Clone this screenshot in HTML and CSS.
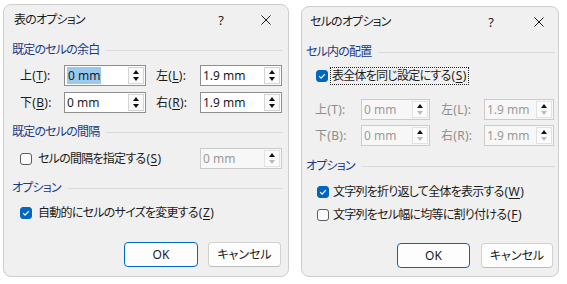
FILE: index.html
```html
<!DOCTYPE html>
<html lang="ja">
<head>
<meta charset="utf-8">
<title>表のオプション / セルのオプション</title>
<link rel="stylesheet" href="styles.css">
</head>
<body>
<div class="screen">
  <section class="dialog dlg-table">
    <header class="titlebar tb-table">
      <span class="title">表のオプション</span>
      <span class="help help-table">?</span>
      <span class="close close-table"><svg width="10" height="10" viewBox="0 0 10 10"><path d="M0.5 0.5L9.5 9.5M9.5 0.5L0.5 9.5" stroke="#1b1b1b" stroke-width="1" fill="none"/></svg></span>
    </header>
    <div class="body body-table">
      <div class="gtitle gt-1">既定のセルの余白</div>
      <div class="mgrid">
        <span class="flabel">上(<u>T</u>):</span>
        <div class="spin"><span class="val"><span class="sel">0 mm</span></span><span class="btns"><i class="up"></i><i class="down"></i></span></div>
        <span class="flabel flabel2">左(<u>L</u>):</span>
        <div class="spin"><span class="val">1.9 mm</span><span class="btns"><i class="up"></i><i class="down"></i></span></div>
        <span class="flabel">下(<u>B</u>):</span>
        <div class="spin"><span class="val">0 mm</span><span class="btns"><i class="up"></i><i class="down"></i></span></div>
        <span class="flabel flabel2">右(<u>R</u>):</span>
        <div class="spin"><span class="val">1.9 mm</span><span class="btns"><i class="up"></i><i class="down"></i></span></div>
      </div>
      <div class="gtitle gt-2">既定のセルの間隔</div>
      <div class="space-row">
        <span class="check"><span class="box"></span><span class="clabel">セルの間隔を指定する<span class="key">(<u>S</u>)</span></span></span>
        <div class="spin spin-off spin-space"><span class="val">0 mm</span><span class="btns"><i class="up"></i><i class="down dim"></i></span></div>
      </div>
      <div class="gtitle gt-3">オプション</div>
      <div class="check auto-row"><span class="box on"><svg width="10" height="10" viewBox="0 0 10 10"><path d="M2.2 5.2l1.9 1.9 3.8-4" stroke="#fff" stroke-width="1.2" fill="none"/></svg></span><span class="clabel">自動的にセルのサイズを変更する<span class="key">(<u>Z</u>)</span></span></div>
      <div class="buttons btns-table">
        <button class="btn primary b-ok-t">OK</button>
        <button class="btn b-cancel-t">キャンセル</button>
      </div>
    </div>
  </section>

  <section class="dialog dlg-cell">
    <header class="titlebar tb-cell">
      <span class="title">セルのオプション</span>
      <span class="help help-cell">?</span>
      <span class="close close-cell"><svg width="10" height="10" viewBox="0 0 10 10"><path d="M0.5 0.5L9.5 9.5M9.5 0.5L0.5 9.5" stroke="#1b1b1b" stroke-width="1" fill="none"/></svg></span>
    </header>
    <div class="body body-cell">
      <div class="gtitle gt-c1">セル内の配置</div>
      <div class="check same-row"><span class="box on"><svg width="10" height="10" viewBox="0 0 10 10"><path d="M2.2 5.2l1.9 1.9 3.8-4" stroke="#fff" stroke-width="1.2" fill="none"/></svg></span><span class="clabel focus">表全体を同じ設定にする<span class="key">(<u>S</u>)</span></span></div>
      <div class="dgrid">
        <span class="flabel off">上(T):</span>
        <div class="spin spin-off"><span class="val">0 mm</span><span class="btns"><i class="up"></i><i class="down dim"></i></span></div>
        <span class="flabel off flabel3">左(L):</span>
        <div class="spin spin-off"><span class="val">1.9 mm</span><span class="btns"><i class="up"></i><i class="down dim"></i></span></div>
        <span class="flabel off">下(B):</span>
        <div class="spin spin-off"><span class="val">0 mm</span><span class="btns"><i class="up"></i><i class="down dim"></i></span></div>
        <span class="flabel off flabel3">右(R):</span>
        <div class="spin spin-off"><span class="val">1.9 mm</span><span class="btns"><i class="up"></i><i class="down dim"></i></span></div>
      </div>
      <div class="gtitle gt-c2">オプション</div>
      <div class="check wrap-row"><span class="box on"><svg width="10" height="10" viewBox="0 0 10 10"><path d="M2.2 5.2l1.9 1.9 3.8-4" stroke="#fff" stroke-width="1.2" fill="none"/></svg></span><span class="clabel">文字列を折り返して全体を表示する<span class="key">(<u>W</u>)</span></span></div>
      <div class="check fit-row"><span class="box"></span><span class="clabel">文字列をセル幅に均等に割り付ける<span class="key">(<u>F</u>)</span></span></div>
      <div class="buttons btns-cell">
        <button class="btn primary b-ok-c">OK</button>
        <button class="btn b-cancel-c">キャンセル</button>
      </div>
    </div>
  </section>
</div>
</body>
</html>
```

FILE: styles.css
```css
* { box-sizing: border-box; }

html, body { margin: 0; padding: 0; background: #ffffff; }

body {
  font-family: "Noto Sans", "Noto Sans CJK JP", sans-serif;
  font-size: 12px;
  line-height: 16px;
  color: #1b1b1b;
  font-feature-settings: "palt";
}

u { text-decoration: underline; text-underline-offset: 2px; text-decoration-thickness: 1px; }

.screen {
  display: flex;
  align-items: flex-start;
  gap: 12px;
  padding: 4px 0 0 3px;
}

.dialog {
  background: #f0f0f0;
  border: 1px solid #cdcdcd;
  border-radius: 8px;
  display: flex;
  flex-direction: column;
}

.dlg-table { width: 286px; height: 273px; }
.dlg-cell { width: 258px; height: 271px; margin-top: 2px; }

/* title bar */
.titlebar {
  height: 29px;
  display: flex;
  align-items: center;
}
.tb-table { padding-left: 10px; }
.tb-cell { padding-left: 8px; }
.title { flex: 1; letter-spacing: -0.8px; }
.help { font-size: 13px; }
.help-table { margin-right: 37px; }
.help-cell { margin-right: 40px; }
.close { width: 10px; height: 10px; display: flex; }
.close-table { margin-right: 17px; }
.close-cell { margin-right: 14px; }

/* body */
.body { flex: 1; display: flex; flex-direction: column; }
.body-table { padding: 0 5px 0 8px; }
.body-cell { padding: 0 3px 0 4px; }

.gtitle {
  display: flex;
  align-items: center;
  height: 16px;
  color: #1a3a84;
  letter-spacing: -0.8px;
}
.gtitle::after {
  content: "";
  flex: 1;
  margin-left: 7px;
  height: 1px;
  background: #d9d9d9;
}
.gt-1 { margin-top: 8px; }
.gt-2 { margin-top: 11px; }
.gt-3 { margin-top: 11px; }
.gt-c1 { margin-top: 8px; }
.gt-c2 { margin-top: 12px; }

/* margin grids */
.mgrid {
  margin: 7px 0 0 8px;
  display: grid;
  grid-template-columns: 44px 82px 54px 82px;
  grid-auto-rows: 21px;
  row-gap: 6px;
  align-items: center;
}
.dgrid {
  margin: 14px 0 0 9px;
  display: grid;
  grid-template-columns: 46px 69px 54px 70px;
  grid-auto-rows: 21px;
  row-gap: 5px;
  align-items: center;
}
.flabel { white-space: nowrap; letter-spacing: 0.3px; }
.flabel2 { padding-left: 10px; }
.flabel3 { padding-left: 11px; }
.flabel.off { color: #8d8d8d; }

/* spin boxes */
.spin {
  height: 21px;
  display: flex;
  background: #ffffff;
  border: 1px solid #8e8e8e;
}
.spin .val {
  flex: 1;
  padding-left: 2px;
  display: flex;
  align-items: center;
  white-space: nowrap;
  overflow: hidden;
}
.sel { background: #99c9ef; line-height: 17px; padding: 0 1px; }
.spin .btns {
  width: 16px;
  margin: 1px;
  border: 1px solid #d4d4d4;
  background: #fbfbfb;
  display: flex;
  flex-direction: column;
  align-items: center;
  justify-content: space-around;
  padding: 1px 0;
}
.spin .btns i {
  width: 0;
  height: 0;
  border-left: 3px solid transparent;
  border-right: 3px solid transparent;
}
.spin .btns i.up { border-bottom: 4px solid #111; }
.spin .btns i.down { border-top: 4px solid #111; }
.spin .btns i.dim { border-top-color: #b9b9b9; }

.spin-off { border-color: #cbcbcb; color: #9a9a9a; background: #f7f7f7; }
.spin-off .btns { border-color: #e2e2e2; }

.space-row {
  margin: 8px 1px 0 8px;
  display: flex;
  align-items: center;
  justify-content: space-between;
}
.spin-space { width: 82px; }

/* checkboxes */
.check { display: flex; align-items: center; white-space: nowrap; }
.box {
  width: 12px;
  height: 12px;
  border: 1px solid #5c5c5c;
  border-radius: 3px;
  background: #fafafa;
  display: flex;
  align-items: center;
  justify-content: center;
  flex: none;
}
.box.on { background: #0067c0; border-color: #0067c0; }
.clabel { margin-left: 6px; letter-spacing: -0.75px; }
.clabel .key { letter-spacing: 0.4px; margin-left: 1px; }
.clabel.focus {
  margin-left: 2px;
  border: 1px dotted #222;
  padding: 0 1px;
  line-height: 16px;
}

.auto-row { margin: 8px 0 0 8px; height: 18px; }
.same-row { margin: 7px 0 0 10px; height: 18px; }
.wrap-row { margin: 9px 0 0 11px; height: 18px; }
.fit-row { margin: 5px 0 0 11px; height: 18px; }
.wrap-row .clabel, .fit-row .clabel { margin-left: 4px; }

/* buttons */
.buttons { display: flex; justify-content: flex-end; }
.btns-table { margin: 20px 2px 0 0; gap: 10px; }
.btns-cell { margin: 19px 2px 0 0; gap: 11px; }

.btn {
  height: 25px;
  font: inherit;
  font-size: 12px;
  color: #1b1b1b;
  background: #fdfdfd;
  border: 1px solid #d0d0d0;
  border-bottom-color: #bdbdbd;
  border-radius: 4px;
  padding: 0;
}
.btn.primary { border: 1px solid #0067c0; }
.b-ok-t { width: 74px; }
.b-cancel-t { width: 73px; }
.b-ok-c { width: 73px; }
.b-cancel-c { width: 72px; }
```
